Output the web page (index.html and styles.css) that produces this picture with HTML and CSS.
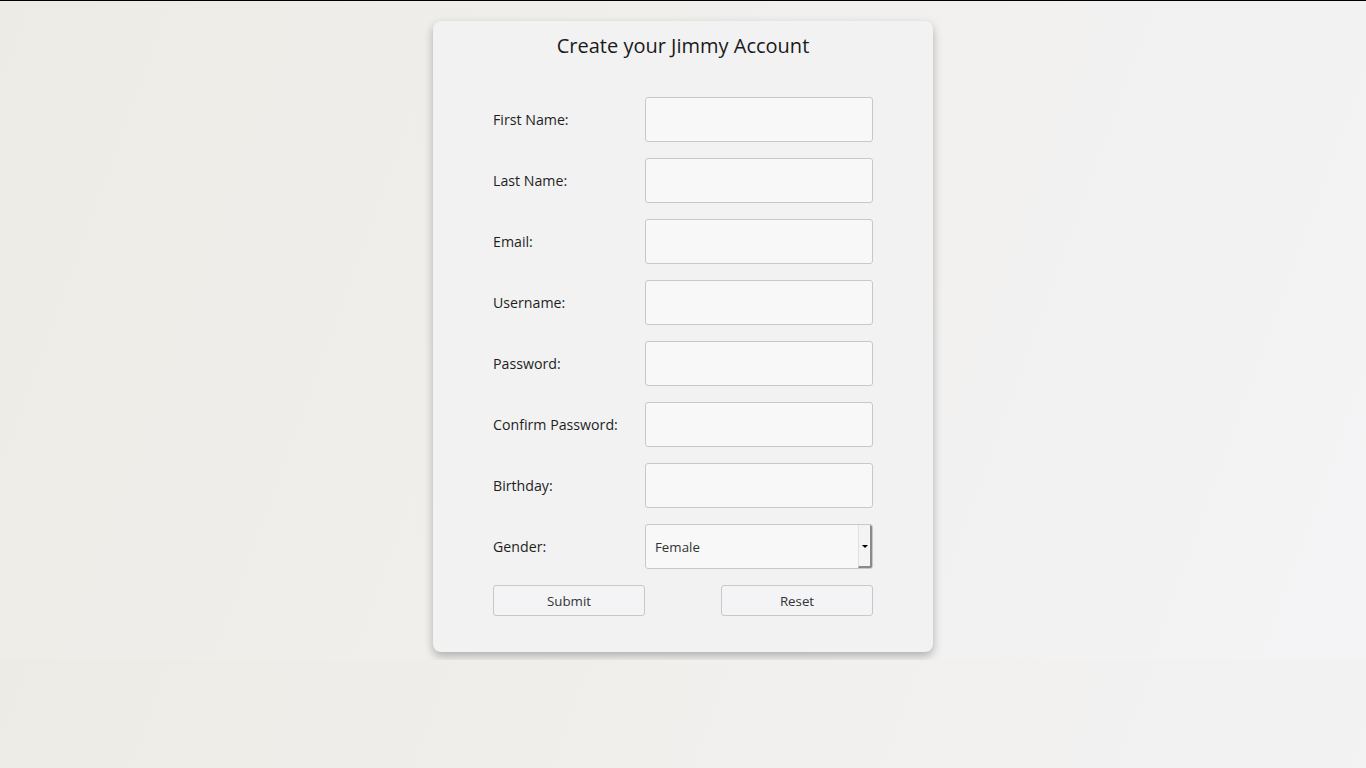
FILE: index.html
```html
<!DOCTYPE html>
<html lang="en">
<head>
  <meta charset="UTF-8">
  <title>Create your Jimmy Account</title>
  <link rel="stylesheet" href="styles.css">
</head>
<body>

  <div class="card">
    <h2>Create your Jimmy Account</h2>

    <form class="signup">
      <label for="fname">First Name:</label>
      <input id="fname" type="text">

      <label for="lname">Last Name:</label>
      <input id="lname" type="text">

      <label for="email">Email:</label>
      <input id="email" type="text">

      <label for="uname">Username:</label>
      <input id="uname" type="text">

      <label for="pwd">Password:</label>
      <input id="pwd" type="password">

      <label for="pwd2">Confirm Password:</label>
      <input id="pwd2" type="password">

      <label for="bday">Birthday:</label>
      <input id="bday" type="text">

      <label for="gender">Gender:</label>
      <div class="select">
        <span class="value">Female</span>
        <span class="arrow"></span>
      </div>

      <div class="buttons">
        <button type="button">Submit</button>
        <button type="reset">Reset</button>
      </div>
    </form>
  </div>

</body>
</html>
```

FILE: styles.css
```css
html {
  background: linear-gradient(110deg, #ecebe5 0%, #f1f0ee 50%, #f4f3f5 100%);
}

body {
  font-family: 'Open Sans', 'Noto Sans', sans-serif;
  margin: 0;
  border-top: 1px solid #000;
  padding: 20px 0 8px;
  color: #222;
}

.card {
  width: 500px;
  height: 631px;
  box-sizing: border-box;
  margin: 0 auto;
  background-color: #f2f2f2;
  border-radius: 8px;
  box-shadow: 0 4px 10px rgba(0,0,0,0.28);
  padding: 11px 60px 0;
}

h2 {
  text-align: center;
  font-weight: normal;
  font-size: 20px;
  line-height: 28px;
  margin: 0 0 37px;
  color: #1a1a1a;
}

.signup {
  display: grid;
  grid-template-columns: 152px 228px;
  row-gap: 16px;
  align-items: center;
}

label {
  font-size: 14.2px;
  color: #1e1e1e;
}

input[type="text"],
input[type="password"],
.select {
  width: 228px;
  height: 45px;
  box-sizing: border-box;
  border: 1px solid #c8c8c8;
  border-radius: 3px;
  background-color: #f8f8f8;
  font-family: inherit;
}

.select {
  display: flex;
  align-items: center;
  justify-content: space-between;
  padding-left: 9px;
  font-size: 13.3px;
  color: #333;
  overflow: hidden;
}

.select .arrow {
  position: relative;
  width: 14px;
  height: 43px;
  box-sizing: border-box;
  background-color: #f4f4f4;
  border-left: 1px solid #e0e0e0;
  border-right: 2px solid #8a8a8a;
  border-bottom: 2px solid #8a8a8a;
}

.select .arrow::after {
  content: "";
  position: absolute;
  left: 3px;
  top: 20px;
  border-left: 3px solid transparent;
  border-right: 3px solid transparent;
  border-top: 3px solid #000;
}

.buttons {
  grid-column: 1 / 3;
  display: flex;
  justify-content: space-between;
}

button {
  width: 152px;
  height: 31px;
  font-family: inherit;
  font-size: 13.3px;
  color: #333;
  background-color: #f4f4f6;
  border: 1px solid #c8c8c8;
  border-radius: 3px;
  cursor: pointer;
}
```
